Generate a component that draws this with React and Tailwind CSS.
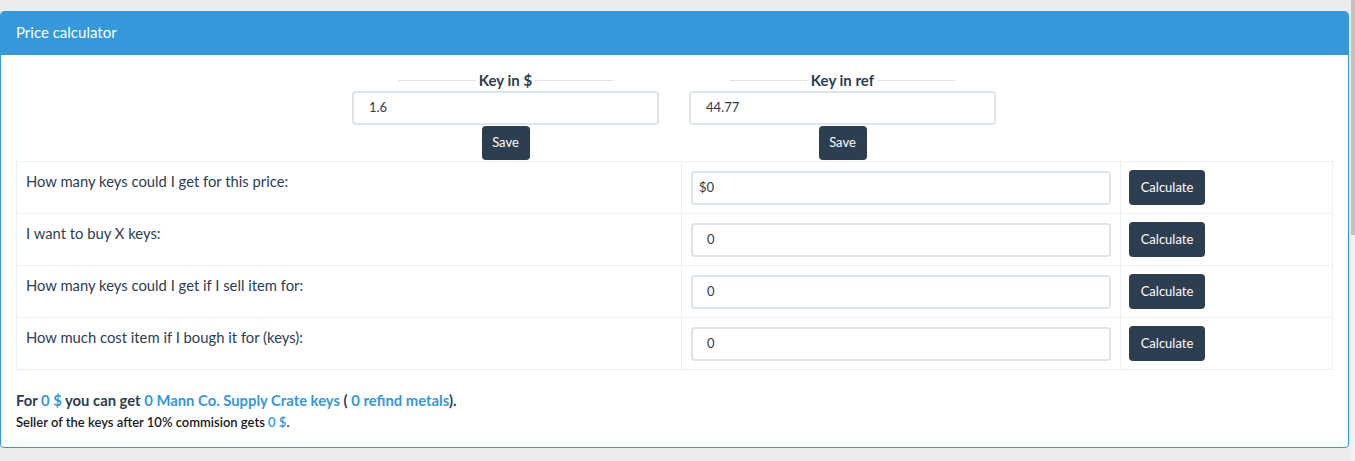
import React from "react";

const rows = [
  { label: "How many keys could I get for this price:", value: "$0", pad: "pl-[6px]" },
  { label: "I want to buy X keys:", value: "0", pad: "pl-[14px]" },
  { label: "How many keys could I get if I sell item for:", value: "0", pad: "pl-[14px]" },
  { label: "How much cost item if I bough it for (keys):", value: "0", pad: "pl-[14px]" },
];

function KeyBox({ title, value }) {
  return (
    <div className="flex flex-col items-center px-[15px]">
      <div className="flex items-center h-[21px] gap-[2px]">
        <div className="w-[78px] h-px bg-[#dde3e8]" />
        <div className="text-[15px] font-bold text-[#2c3e50] leading-[21px] px-[1px]">{title}</div>
        <div className="w-[78px] h-px bg-[#dde3e8]" />
      </div>
      <div className="w-full h-[34px] border-2 border-[#dce4ec] rounded-[4px] flex items-center pl-[15px] text-[13px] text-[#2c3e50]">
        {value}
      </div>
      <button className="w-[48px] h-[34px] bg-[#2c3e50] text-white text-[13px] rounded-[4px] mt-[1px]">Save</button>
    </div>
  );
}

export default function App() {
  return (
    <div className="w-[1355px] h-[461px] bg-[#ececec] flex font-['Lato',sans-serif] overflow-hidden">
      <div className="flex-1 pt-[11px] pr-[2px]">
        <div className="border border-[#3498db] rounded-[4px] bg-white h-[437px] overflow-hidden">
          <div className="bg-[#3498db] h-[43px] flex items-center pl-[15px] pb-[2px] text-white text-[15px]">
            Price calculator
          </div>
          <div className="px-[15px] pt-[15px]">
            <div className="grid grid-cols-[321px_337px_337px]">
              <div />
              <KeyBox title="Key in $" value="1.6" />
              <KeyBox title="Key in ref" value="44.77" />
            </div>
            <div className="mt-[1px] border-t border-l border-[#ecf0f1] grid grid-cols-[665px_439px_1fr]">
              {rows.map((r, i) => (
                <React.Fragment key={i}>
                  <div className="h-[52px] border-r border-b border-[#ecf0f1] pl-[9px] pt-[9px] text-[14.8px] leading-[21px] text-[#2c3e50]">
                    {r.label}
                  </div>
                  <div className="h-[52px] border-r border-b border-[#ecf0f1] px-[9px] pt-[9px]">
                    <div className={`h-[34px] border-2 border-[#dce4ec] rounded-[4px] flex items-center ${r.pad} text-[13px] text-[#2c3e50]`}>
                      {r.value}
                    </div>
                  </div>
                  <div className="h-[52px] border-r border-b border-[#ecf0f1] pl-[8px] pt-[8px]">
                    <button className="w-[76px] h-[35px] bg-[#2c3e50] text-white text-[13px] rounded-[4px]">Calculate</button>
                  </div>
                </React.Fragment>
              ))}
            </div>
            <div className="mt-[20px] text-[14.8px] font-bold leading-[21px] text-[#2c3e50]">
              For <span className="text-[#3498db]">0 $</span> you can get{" "}
              <span className="text-[#3498db]">0 Mann Co. Supply Crate keys</span> ({" "}
              <span className="text-[#3498db]">0 refind metals</span>).
            </div>
            <div className="mt-[1px] text-[13px] font-semibold leading-[21px] text-[#1a1a1a]">
              Seller of the keys after 10% commision gets <span className="text-[#3498db]">0 $</span>.
            </div>
          </div>
        </div>
      </div>
      <div className="w-[4px] h-full bg-[#f1f1f1] flex flex-col">
        <div className="h-[235px] bg-[#c1c1c1]" />
      </div>
    </div>
  );
}
